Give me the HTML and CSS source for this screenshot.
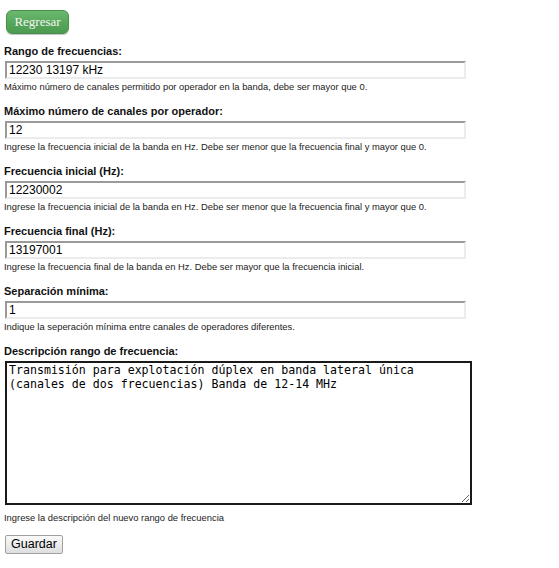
FILE: index.html
```html
<!DOCTYPE html>
<html lang="es">
<head>
<meta charset="utf-8">
<title>Rango de frecuencias</title>
<link rel="stylesheet" href="styles.css">
</head>
<body>
<div class="top">
  <button class="btn-back" type="button">Regresar</button>
</div>
<form class="form">
  <div class="field">
    <label class="label">Rango de frecuencias:</label>
    <input class="input" type="text" value="12230 13197 kHz">
    <div class="help">Máximo número de canales permitido por operador en la banda, debe ser mayor que 0.</div>
  </div>
  <div class="field">
    <label class="label">Máximo número de canales por operador:</label>
    <input class="input" type="text" value="12">
    <div class="help">Ingrese la frecuencia inicial de la banda en Hz. Debe ser menor que la frecuencia final y mayor que 0.</div>
  </div>
  <div class="field">
    <label class="label">Frecuencia inicial (Hz):</label>
    <input class="input" type="text" value="12230002">
    <div class="help">Ingrese la frecuencia inicial de la banda en Hz. Debe ser menor que la frecuencia final y mayor que 0.</div>
  </div>
  <div class="field">
    <label class="label">Frecuencia final (Hz):</label>
    <input class="input" type="text" value="13197001">
    <div class="help">Ingrese la frecuencia final de la banda en Hz. Debe ser mayor que la frecuencia inicial.</div>
  </div>
  <div class="field">
    <label class="label">Separación mínima:</label>
    <input class="input" type="text" value="1">
    <div class="help">Indique la seperación mínima entre canales de operadores diferentes.</div>
  </div>
  <div class="field">
    <label class="label">Descripción rango de frecuencia:</label>
    <textarea class="textarea">Transmisión para explotación dúplex en banda lateral única (canales de dos frecuencias) Banda de 12-14 MHz</textarea>
    <div class="help help-desc">Ingrese la descripción del nuevo rango de frecuencia</div>
  </div>
  <button class="btn-save" type="button">Guardar</button>
</form>
</body>
</html>
```
FILE: styles.css
```css
html, body {
  background: #fff;
}
body {
  margin: 0;
  padding: 10px 4px 0 4px;
  font-family: "Liberation Sans", Arial, sans-serif;
  color: #111;
}
.top {
  height: 24px;
  margin-bottom: 10px;
}
.btn-back {
  margin: 0 0 0 2px;
  width: 63px;
  height: 24px;
  padding: 0;
  border: 1px solid #4a8f4d;
  border-radius: 6px;
  background: linear-gradient(#6bb96e, #55a559 60%, #4c9b50);
  box-shadow: 0 1px 1px rgba(0,0,0,0.25);
  color: #f4f4f4;
  font-family: "Liberation Serif", "Times New Roman", serif;
  font-size: 13px;
}
.form {
  display: flex;
  flex-direction: column;
  align-items: flex-start;
}
.field {
  display: flex;
  flex-direction: column;
  align-items: flex-start;
  margin-bottom: 11px;
}
.label {
  display: block;
  font-weight: bold;
  font-size: 11px;
  line-height: 15px;
  height: 15px;
  color: #111;
}
.input {
  display: block;
  box-sizing: border-box;
  margin: 2px 0 0 1px;
  width: 461px;
  height: 18px;
  padding: 0 2px;
  border-top: 2px solid #9a9a9a;
  border-left: 2px solid #9a9a9a;
  border-right: 2px solid #ececec;
  border-bottom: 2px solid #ececec;
  background: #fff;
  font-family: "Liberation Sans", Arial, sans-serif;
  font-size: 12px;
  color: #000;
  outline: none;
}
.help {
  margin-top: 2px;
  font-size: 9.4px;
  line-height: 12px;
  color: #222;
}
.textarea {
  display: block;
  box-sizing: border-box;
  margin: 2px 0 0 1px;
  width: 467px;
  height: 144px;
  padding: 0 2px;
  border: 2px solid #1a1a1a;
  border-radius: 0;
  font-family: "DejaVu Sans Mono", monospace;
  font-size: 11.6px;
  line-height: 14px;
  color: #000;
  outline: none;
}
.help-desc {
  margin-top: 7px;
}
.btn-save {
  margin: 0 0 0 1px;
  height: 19px;
  padding: 0 5px;
  border: 1px solid #a0a0a0;
  border-radius: 2px;
  background: linear-gradient(#fafafa, #dedede);
  font-family: "Liberation Sans", Arial, sans-serif;
  font-size: 12.5px;
  line-height: 15px;
  color: #000;
}
```
